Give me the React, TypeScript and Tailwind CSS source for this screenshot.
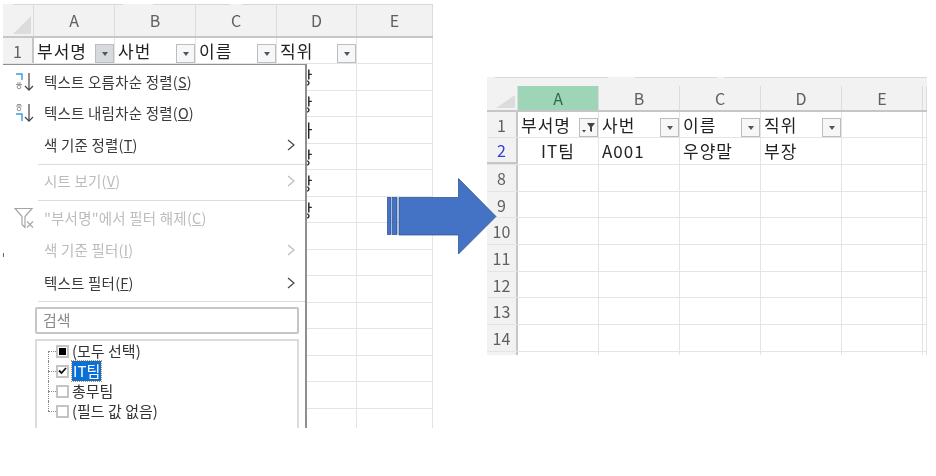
import React from 'react';

const kr = "font-['Noto_Sans_CJK_KR','Noto_Sans',sans-serif]";

type Col = { label: string; w: string };

const colsLeft: Col[] = [
  { label: 'A', w: 'w-[81px]' },
  { label: 'B', w: 'w-[81px]' },
  { label: 'C', w: 'w-[81px]' },
  { label: 'D', w: 'w-[80px]' },
  { label: 'E', w: 'w-[76px]' },
];

const colsRight: Col[] = [
  { label: 'A', w: 'w-[81px]' },
  { label: 'B', w: 'w-[81px]' },
  { label: 'C', w: 'w-[81px]' },
  { label: 'D', w: 'w-[81px]' },
  { label: 'E', w: 'w-[81px]' },
  { label: '', w: 'w-[4px]' },
];

const FilterButton: React.FC<{ active?: boolean; filtered?: boolean }> = ({ active, filtered }) => (
  <span className={`absolute right-0 bottom-0 flex h-[19px] w-[19px] items-center justify-center border border-[#bdbdbd] ${active ? 'bg-[#d6d9de]' : 'bg-[#f6f7f9]'}`}>
    {filtered ? (
      <svg width="15" height="11" viewBox="0 0 15 11"><path d="M6 1h8L11 5v5L9 9V5z" fill="#444" /><path d="M1 8h4L3 10.5z" fill="#444" /></svg>
    ) : (
      <span className="h-0 w-0 border-x-[3.5px] border-t-[4px] border-x-transparent border-t-[#555]" />
    )}
  </span>
);

const ColumnHeader: React.FC<{ cols: Col[]; h: string; corner: string; selected?: boolean }> = ({ cols, h, corner, selected }) => (
  <div className={`flex ${h} border-b-2 border-[#c6c6c6] bg-[#f2f2f2]`}>
    <div className="relative w-[31px] border-r border-[#dcdcdc]">
      <svg className={`absolute right-[2px] bottom-[2px] ${corner}`} viewBox="0 0 19 19" preserveAspectRatio="none"><path d="M19 0v19H0z" fill="#dcdcdc" /></svg>
    </div>
    {cols.map((c, i) => (
      <div key={i} className={`${c.w} flex items-center justify-center border-r border-[#dcdcdc] text-[16px] ${selected && i === 0 ? 'bg-[#9fd5b7] text-[#2d6a4a]' : 'text-[#606060]'}`}>
        {c.label}
      </div>
    ))}
  </div>
);

const Row: React.FC<{ n: string; cols: Col[]; h: string; accent?: boolean; cells?: React.ReactNode[] }> = ({ n, cols, h, accent, cells }) => (
  <div className={`flex ${h} border-b border-[#e4e4e4]`}>
    <div className={`flex w-[31px] items-center justify-center border-r-2 border-[#c6c6c6] bg-[#f2f2f2] text-[16px] ${accent ? 'border-b-2 text-[#3b3bd6]' : 'text-[#606060]'}`}>{n}</div>
    {cols.map((c, i) => (
      <div key={i} className={`${c.w} relative flex items-center overflow-visible border-r border-[#e4e4e4] pl-[3px] text-[17px] tracking-[1px] text-[#222]`}>
        {cells?.[i]}
      </div>
    ))}
  </div>
);

const MenuItem: React.FC<{ label: string; mnemonic: string; disabled?: boolean; arrow?: boolean; icon?: React.ReactNode; h: string }> = ({ label, mnemonic, disabled, arrow, icon, h }) => (
  <div className={`relative flex ${h} items-center pl-[41px] pr-[10px]`}>
    {icon && <span className="absolute left-[11px] top-1/2 -translate-y-1/2">{icon}</span>}
    <span className={`flex-1 text-[14.5px] tracking-[0.2px] ${disabled ? 'text-[#bcbcbc]' : 'text-[#3a3a3a]'}`}>
      {label}(<span className="underline">{mnemonic}</span>)
    </span>
    {arrow && (
      <svg width="8" height="12" viewBox="0 0 8 12" fill="none"><path d="M1 1l6 5-6 5" stroke={disabled ? '#bdbdbd' : '#444'} strokeWidth="1.2" /></svg>
    )}
  </div>
);

const Separator: React.FC<{ className?: string }> = ({ className }) => (
  <div className={`ml-[35px] h-px bg-[#dcdcdc] ${className ?? ''}`} />
);

const SortIcon: React.FC<{ ascending: boolean }> = ({ ascending }) => (
  <svg width="20" height="20" viewBox="0 0 20 20" fill="none">
    <path d={ascending ? 'M2 2h6v6' : 'M2 11h6v7'} stroke="#3f9bdc" strokeWidth="1.4" />
    <g stroke="#8a8a8a" strokeWidth="0.9">
      <path d={ascending ? 'M3 11h4M2 12.5h6' : 'M3 1.5h4M2 3h6'} />
      <circle cx="5" cy={ascending ? 15 : 6} r="1.8" />
    </g>
    <path d="M15 1v17M11 14l4 4.2 4-4.2" stroke="#444" strokeWidth="1.2" />
  </svg>
);

const FilterClearIcon = () => (
  <svg width="20" height="21" viewBox="0 0 20 21" fill="none">
    <path d="M1 1h17l-7 8v11l-3-3V9z" stroke="#a6a6a6" strokeWidth="1.2" />
    <path d="M13 14l6 6M19 14l-6 6" stroke="#a6a6a6" strokeWidth="1.1" />
  </svg>
);

const TreeItem: React.FC<{ mark?: 'fill' | 'check'; children: React.ReactNode; selected?: boolean; first?: boolean; last?: boolean }> = ({ mark, children, selected, first, last }) => (
  <div className="relative flex h-[20px] items-center pl-[19px]">
    <span className={`absolute left-[11px] border-l border-dotted border-[#888] ${first ? 'top-[10px] h-[10px]' : last ? 'top-0 h-[10px]' : 'top-0 h-[20px]'}`} />
    <span className="absolute left-[11px] top-[10px] w-[8px] border-t border-dotted border-[#888]" />
    <span className="relative flex h-[13px] w-[13px] items-center justify-center border-2 border-[#c4c4c4] bg-white">
      {mark === 'fill' && <span className="h-[7px] w-[7px] bg-black" />}
      {mark === 'check' && (
        <svg width="9" height="8" viewBox="0 0 9 8" fill="none"><path d="M1 3.5l2.5 2.5L8 1" stroke="#111" strokeWidth="1.8" /></svg>
      )}
    </span>
    <span className={`ml-[3px] text-[15px] leading-[20px] ${selected ? 'bg-[#0a6fd6] px-[1px] text-white outline-1 outline-dotted outline-[#c58a3c]' : 'text-[#333]'}`}>{children}</span>
  </div>
);

const FilterMenu = () => (
  <div className={`absolute left-0 top-[60px] h-[364px] w-[304px] border-r-2 border-t border-[#8f8f8f] bg-white pt-[2px] ${kr}`}>
    <MenuItem h="h-[30px]" label="텍스트 오름차순 정렬" mnemonic="S" icon={<SortIcon ascending />} />
    <MenuItem h="h-[32px]" label="텍스트 내림차순 정렬" mnemonic="O" icon={<SortIcon ascending={false} />} />
    <MenuItem h="h-[32px]" arrow label="색 기준 정렬" mnemonic="T" />
    <Separator className="mt-[3px]" />
    <MenuItem h="h-[32px]" arrow disabled label="시트 보기" mnemonic="V" />
    <Separator className="mt-[3px]" />
    <MenuItem h="h-[34px]" disabled label={'"부서명"에서 필터 해제'} mnemonic="C" icon={<FilterClearIcon />} />
    <MenuItem h="h-[30px]" arrow disabled label="색 기준 필터" mnemonic="I" />
    <MenuItem h="h-[36px]" arrow label="텍스트 필터" mnemonic="F" />
    <Separator />
    <div className="ml-[32px] mt-[5px] flex h-[27px] w-[264px] items-center rounded-[2px] border-2 border-[#c6c6c6] pl-[6px] text-[15px] text-[#8a8a8a]">검색</div>
    <div className="ml-[32px] mt-[5px] h-[90px] w-[264px] border-x-2 border-t-2 border-[#dcdcdc]">
      <TreeItem mark="fill" first>(모두 선택)</TreeItem>
      <TreeItem mark="check" selected>IT팀</TreeItem>
      <TreeItem>총무팀</TreeItem>
      <TreeItem last>(필드 값 없음)</TreeItem>
    </div>
    <span className="absolute left-0 top-[188px] h-[4px] w-px bg-[#666]" />
  </div>
);

const Arrow = () => (
  <svg className="absolute left-[387px] top-[178px]" width="110" height="77" viewBox="0 0 110 77">
    <rect x="0.5" y="19.5" width="3.5" height="37" fill="#4472c4" stroke="#2f528f" strokeWidth="0.75" />
    <rect x="5.5" y="19.5" width="4.5" height="37" fill="#4472c4" stroke="#2f528f" strokeWidth="0.75" />
    <path d="M12 19.5H71.5V0.5L109 38.5 71.5 76V57H12z" fill="#4472c4" stroke="#2f528f" strokeWidth="0.75" />
  </svg>
);

const TabEdge: React.FC<{ segments: string[]; className: string }> = ({ segments, className }) => (
  <div className={`absolute flex h-px gap-0 ${className}`}>
    {segments.map((s, i) => <span key={i} className={`h-px bg-[#d8d8d8] ${s}`} />)}
  </div>
);

const leftRows = ['2', '3', '4', '5', '6', '7', '8', '9', '10', '11', '12', '13', '14', ''];
const leftPeek: Record<number, string> = { 0: '부장', 1: '부장', 2: '이사', 3: '부장', 4: '부장', 5: '과장' };

const rightRows = ['8', '9', '10', '11', '12', '13', '14', ''];

export default function App() {
  return (
    <div className={`relative h-[476px] w-[936px] overflow-hidden bg-white blur-[0.4px] ${kr}`}>
      <div className="flex pt-[4px]">
        {/* left sheet */}
        <div className="relative ml-[3px] h-[424px] w-[430px] overflow-hidden">
          <ColumnHeader cols={colsLeft} h="h-[34px]" corner="h-[18px] w-[18px]" />
          <Row n="1" cols={colsLeft} h="h-[26px]" cells={[
            <><span>부서명</span><FilterButton active /></>,
            <><span>사번</span><FilterButton /></>,
            <><span>이름</span><FilterButton /></>,
            <><span>직위</span><FilterButton /></>,
          ]} />
          {leftRows.map((r, i) => (
            <Row key={i} n={r} cols={colsLeft} h="h-[26.5px]" cells={[null, null, null, <span key="d">{leftPeek[i] ?? ''}</span>]} />
          ))}
          <FilterMenu />
        </div>
        {/* right sheet */}
        <div className="ml-[54px] mt-[73px] h-[278px] w-[440px] overflow-hidden">
          <div className="h-[9px] bg-[#f2f2f2]" />
          <ColumnHeader cols={colsRight} h="h-[26px]" corner="h-[13px] w-[19px]" selected />
          <Row n="1" cols={colsRight} h="h-[26px]" cells={[
            <><span>부서명</span><FilterButton filtered /></>,
            <><span>사번</span><FilterButton /></>,
            <><span>이름</span><FilterButton /></>,
            <><span>직위</span><FilterButton /></>,
          ]} />
          <Row n="2" accent cols={colsRight} h="h-[27px]" cells={[
            <span className="w-full pr-[3px] text-center">IT팀</span>, 'A001', '우양말', '부장',
          ]} />
          {rightRows.map((r, i) => (
            <Row key={i} n={r} cols={colsRight} h="h-[26.7px]" />
          ))}
        </div>
      </div>
      <TabEdge className="left-[13px] top-[4px]" segments={['w-[110px]', 'ml-[30px] w-[77px]', 'ml-[12px] w-[191px]']} />
      <TabEdge className="left-[495px] top-[77px]" segments={['w-[113px]', 'ml-[27px] w-[82px]', 'ml-[7px] w-[203px]']} />
      <Arrow />
    </div>
  );
}
